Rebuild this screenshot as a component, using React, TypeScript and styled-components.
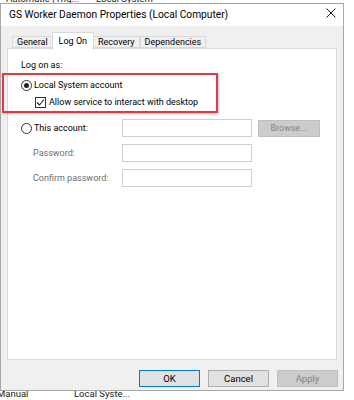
import React from "react";
import styled, { createGlobalStyle } from "styled-components";

const GlobalStyle = createGlobalStyle`
  body {
    margin: 0;
    background: #ffffff;
    font-family: Roboto, "Noto Sans", "Liberation Sans", sans-serif;
  }
`;

const TABS = ["General", "Log On", "Recovery", "Dependencies"];

export default function App() {
  return (
    <Page>
      <GlobalStyle />
      <Strip height={3}>
        <StripText offset={-7}>
          <StripCell width={96} pad={6}>Automatic (Trig...</StripCell>
          <StripCell width={80}>Local System</StripCell>
        </StripText>
      </Strip>
      <Window>
        <TitleBar>
          <Title>GS Worker Daemon Properties (Local Computer)</Title>
          <CloseIcon />
        </TitleBar>
        <Body>
          <TabStrip>
            {TABS.map((t) => (
              <Tab key={t} active={t === "Log On"}>
                {t}
              </Tab>
            ))}
          </TabStrip>
          <Panel>
            <Label>Log on as:</Label>
            <OptionRow>
              <Radio checked />
              <span>Local System account</span>
            </OptionRow>
            <CheckRow>
              <CheckBox />
              <span>Allow service to interact with desktop</span>
            </CheckRow>
            <AccountGrid>
              <OptionRow>
                <Radio />
                <span>This account:</span>
              </OptionRow>
              <Field />
              <SmallButton>Browse...</SmallButton>
              <FieldLabel>Password:</FieldLabel>
              <Field />
              <span />
              <FieldLabel>Confirm password:</FieldLabel>
              <Field />
            </AccountGrid>
            <Highlight />
          </Panel>
          <Footer>
            <DialogButton focused>OK</DialogButton>
            <DialogButton>Cancel</DialogButton>
            <DialogButton disabled>Apply</DialogButton>
          </Footer>
        </Body>
      </Window>
      <Strip height={9}>
        <StripText offset={-3}>
          <StripCell width={77} pad={0} shift={-3}>Manual</StripCell>
          <StripCell width={80}>Local Syste...</StripCell>
        </StripText>
      </Strip>
    </Page>
  );
}

function CloseIcon() {
  return (
    <CloseBox>
      <svg width="10" height="10" viewBox="0 0 10 10">
        <path d="M0.5 0.5 L9.5 9.5 M9.5 0.5 L0.5 9.5" stroke="#1a1a1a" strokeWidth="1" fill="none" />
      </svg>
    </CloseBox>
  );
}

function Radio({ checked }: { checked?: boolean }) {
  return <RadioCircle>{checked && <RadioDot />}</RadioCircle>;
}

function CheckBox() {
  return (
    <CheckSquare>
      <svg width="9" height="9" viewBox="0 0 9 9">
        <path d="M1 4.5 L3.5 7 L8 1.5" stroke="#222" strokeWidth="1.1" fill="none" />
      </svg>
    </CheckSquare>
  );
}

const Page = styled.div`
  width: 354px;
  height: 400px;
  overflow: hidden;
  display: flex;
  flex-direction: column;
  background: #ffffff;
`;

const Strip = styled.div<{ height: number }>`
  height: ${(p) => p.height}px;
  overflow: hidden;
  flex-shrink: 0;
`;

const StripText = styled.div<{ offset: number }>`
  display: flex;
  margin-top: ${(p) => p.offset}px;
  font-size: 9.5px;
  line-height: 12px;
  color: #1a1a1a;
  white-space: nowrap;
`;

const StripCell = styled.span<{ width: number; pad?: number; shift?: number }>`
  display: inline-block;
  box-sizing: border-box;
  width: ${(p) => p.width}px;
  margin-left: ${(p) => p.shift ?? 0}px;
  padding-left: ${(p) => p.pad ?? 0}px;
  overflow: hidden;
`;

const Window = styled.div`
  width: 344px;
  height: 388px;
  box-sizing: border-box;
  border: 1px solid #a8a8a8;
  display: flex;
  flex-direction: column;
  background: #ffffff;
  flex-shrink: 0;
`;

const TitleBar = styled.div`
  height: 24px;
  display: flex;
  align-items: center;
  justify-content: space-between;
  padding: 0 7px 0 8px;
  background: #ffffff;
`;

const Title = styled.div`
  font-size: 10.2px;
  color: #000;
  margin-top: -2px;
`;

const CloseBox = styled.div`
  width: 10px;
  height: 10px;
  display: flex;
  margin-top: -4px;
`;

const Body = styled.div`
  flex: 1;
  background: #f0f0f0;
  padding: 6px 6px 3px 6px;
  display: flex;
  flex-direction: column;
`;

const TabStrip = styled.div`
  display: flex;
  align-items: flex-end;
  height: 16px;
  padding-left: 5px;
  position: relative;
  z-index: 1;
`;

const Tab = styled.div<{ active?: boolean }>`
  box-sizing: border-box;
  height: ${(p) => (p.active ? 18 : 12)}px;
  margin: 0 ${(p) => (p.active ? -1 : 0)}px ${(p) => (p.active ? -2 : 0)}px;
  padding: 0 ${(p) => (p.active ? 6 : 4)}px;
  border: 1px solid #d9d9d9;
  border-bottom: ${(p) => (p.active ? "none" : "1px solid #d9d9d9")};
  background: ${(p) => (p.active ? "#ffffff" : "#f0f0f0")};
  font-size: 9px;
  line-height: ${(p) => (p.active ? 16 : 11)}px;
  color: #000;
  position: relative;
  z-index: ${(p) => (p.active ? 2 : 1)};
  & + & {
    border-left: ${(p) => (p.active ? "1px solid #d9d9d9" : "none")};
  }
`;

const Panel = styled.div`
  height: 312px;
  box-sizing: border-box;
  background: #ffffff;
  border: 1px solid #d9d9d9;
  padding: 10px 13px;
  position: relative;
  font-size: 9px;
  color: #000;
`;

const Label = styled.div`
  line-height: 13px;
`;

const OptionRow = styled.div`
  display: flex;
  align-items: center;
  gap: 2px;
  line-height: 13px;
  margin-top: 7px;
`;

const CheckRow = styled(OptionRow)`
  margin-top: 4px;
  margin-left: 14px;
  gap: 3px;
`;

const RadioCircle = styled.div`
  width: 11px;
  height: 11px;
  box-sizing: border-box;
  border: 1px solid #333;
  border-radius: 50%;
  display: flex;
  align-items: center;
  justify-content: center;
  background: #fff;
`;

const RadioDot = styled.div`
  width: 5px;
  height: 5px;
  border-radius: 50%;
  background: #222;
`;

const CheckSquare = styled.div`
  width: 11px;
  height: 11px;
  box-sizing: border-box;
  border: 1px solid #333;
  display: flex;
  align-items: center;
  justify-content: center;
  background: #fff;
`;

const AccountGrid = styled.div`
  display: grid;
  grid-template-columns: 95px 130px 62px;
  column-gap: 6px;
  row-gap: 7px;
  align-items: center;
  margin-top: 10px;
  ${OptionRow} {
    margin-top: 0;
  }
`;

const FieldLabel = styled.div`
  color: #6d6d6d;
  padding-left: 12px;
  line-height: 13px;
  white-space: nowrap;
`;

const Field = styled.div`
  height: 18px;
  box-sizing: border-box;
  border: 1px solid #cfcfcf;
  background: #fff;
`;

const SmallButton = styled.div`
  height: 17px;
  box-sizing: border-box;
  border: 1px solid #bfbfbf;
  background: #cccccc;
  color: #838383;
  display: flex;
  align-items: center;
  justify-content: center;
`;

const Highlight = styled.div`
  position: absolute;
  left: -6px;
  top: 24px;
  width: 216px;
  height: 40px;
  box-sizing: border-box;
  border: 2px solid #e23a42;
  box-shadow: 1px 1px 2px rgba(0, 0, 0, 0.25);
`;

const Footer = styled.div`
  display: flex;
  justify-content: flex-end;
  gap: 8px;
  margin-top: 10px;
  margin-right: -1px;
`;

const DialogButton = styled.div<{ focused?: boolean; disabled?: boolean }>`
  width: 61px;
  height: 17px;
  box-sizing: border-box;
  border: 1px solid ${(p) => (p.focused ? "#0078d7" : p.disabled ? "#bfbfbf" : "#adadad")};
  background: ${(p) => (p.disabled ? "#cccccc" : "#e1e1e1")};
  color: ${(p) => (p.disabled ? "#838383" : "#000")};
  font-size: 9.5px;
  display: flex;
  align-items: center;
  justify-content: center;
`;
